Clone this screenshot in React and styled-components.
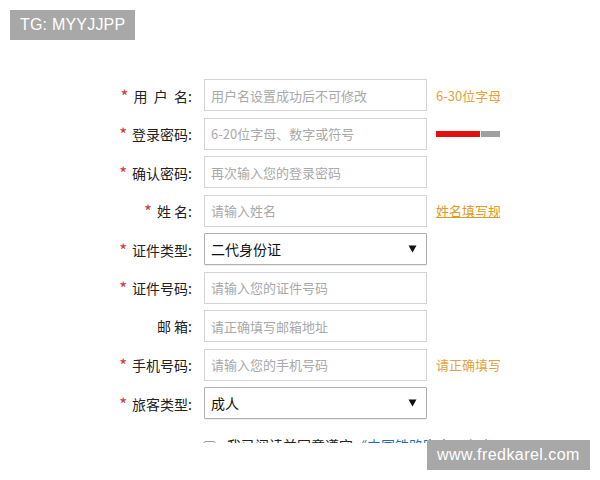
import React from "react";
import styled, { createGlobalStyle } from "styled-components";

const Global = createGlobalStyle`
  html, body { margin: 0; padding: 0; background: #fff; }
  body { font-family: "Noto Sans CJK SC", "Noto Sans", sans-serif; }
`;

const Page = styled.div`
  position: relative;
  width: 600px;
  height: 480px;
  overflow: hidden;
  background: #fff;
`;

const Stamp = styled.div`
  position: absolute;
  ${(p) => (p.$corner === "tl" ? "top: 10px; left: 10px;" : "top: 440px; left: 427px;")}
  height: 30px;
  padding: 0 10px;
  background: #a8a8a8;
  color: #fff;
  font-family: "Liberation Sans", Arial, sans-serif;
  font-size: 16px;
  letter-spacing: ${(p) => (p.$corner === "tl" ? "0.2px" : "0.45px")};
  line-height: 30px;
  white-space: nowrap;
`;

const Form = styled.div`
  margin: 79px 0 0 100px;
  width: 400px;
  height: 364px;
  overflow: hidden;
  display: flex;
  flex-direction: column;
  gap: 6.5px;
`;

const Row = styled.div`
  display: flex;
  align-items: center;
  height: 32px;
  gap: 8px;
  flex-shrink: 0;
`;

const Label = styled.div`
  width: 92px;
  padding-right: 4px;
  text-align: right;
  font-size: 14px;
  color: #222;
  white-space: pre;
  flex-shrink: 0;
`;

const Star = styled.span`
  color: #d9363e;
  font-size: 17px;
  margin-right: 5px;
  vertical-align: -1px;
`;

const Input = styled.input`
  box-sizing: border-box;
  width: 223px;
  height: 32px;
  border: 1px solid #d4d4d4;
  padding: 0 6px;
  margin: 0;
  font-family: inherit;
  font-size: 13px;
  color: #333;
  outline: none;
  flex-shrink: 0;
  &::placeholder { color: #a9a9a9; }
`;

const Select = styled.div`
  box-sizing: border-box;
  width: 223px;
  height: 32px;
  border: 1px solid #b0b0b0;
  border-radius: 1px;
  box-shadow: 0 1px 1px rgba(0, 0, 0, 0.08);
  padding: 0 9px 0 6px;
  display: flex;
  align-items: center;
  justify-content: space-between;
  font-size: 14px;
  color: #111;
  flex-shrink: 0;
`;

const Arrow = styled.svg`
  width: 9px;
  height: 8px;
`;

const Hint = styled.span`
  margin-left: 1px;
  font-size: 13px;
  white-space: nowrap;
  text-decoration: ${(p) => (p.$link ? "underline" : "none")};
  color: ${(p) => (p.$link ? "#dc9a1e" : "#e3a23a")};
`;

const Strength = styled.div`
  margin-left: 1px;
  display: flex;
  gap: 1px;
  height: 6px;
`;

const Bar = styled.div`
  height: 6px;
  width: ${(p) => p.$w}px;
  background: ${(p) => p.$c};
  flex-shrink: 0;
`;

const AgreeRow = styled.div`
  display: flex;
  align-items: flex-start;
  padding: 9px 0 0 103px;
  gap: 11px;
  font-size: 14px;
  color: #222;
  white-space: nowrap;
  flex-shrink: 0;
`;

const Box = styled.span`
  box-sizing: border-box;
  width: 13px;
  height: 13px;
  margin-top: 6px;
  border: 1px solid #9a9a9a;
  border-radius: 3px;
  flex-shrink: 0;
`;

const Blue = styled.span`
  color: #1d6fc2;
`;

const Field = ({ star, label, placeholder, children }) => (
  <Row>
    <Label>
      {star && <Star>*</Star>}
      {label}
    </Label>
    <Input placeholder={placeholder} />
    {children}
  </Row>
);

const SelectField = ({ label, value }) => (
  <Row>
    <Label>
      <Star>*</Star>
      {label}
    </Label>
    <Select>
      <span>{value}</span>
      <Arrow viewBox="0 0 9 8">
        <path d="M0.5 0.5 H8.5 L4.5 7.5 Z" fill="#111" />
      </Arrow>
    </Select>
  </Row>
);

export default function App() {
  return (
    <Page>
      <Global />
      <Stamp $corner="tl">TG: MYYJJPP</Stamp>
      <Form>
        <Field star label="用  户  名:" placeholder="用户名设置成功后不可修改">
          <Hint>6-30位字母、数字或“_”,字母开头</Hint>
        </Field>
        <Field star label="登录密码:" placeholder="6-20位字母、数字或符号">
          <Strength>
            <Bar $w={44} $c="#e41010" />
            <Bar $w={44} $c="#a0a0a0" />
          </Strength>
        </Field>
        <Field star label="确认密码:" placeholder="再次输入您的登录密码" />
        <Field star label="姓 名:" placeholder="请输入姓名">
          <Hint $link>姓名填写规则</Hint>
        </Field>
        <SelectField label="证件类型:" value="二代身份证" />
        <Field star label="证件号码:" placeholder="请输入您的证件号码" />
        <Field label="邮 箱:" placeholder="请正确填写邮箱地址" />
        <Field star label="手机号码:" placeholder="请输入您的手机号码">
          <Hint>请正确填写手机号码</Hint>
        </Field>
        <SelectField label="旅客类型:" value="成人" />
        <AgreeRow>
          <Box />
          <span>
            我已阅读并同意遵守<Blue>《中国铁路客户服务中心网站服务条款》</Blue>
          </span>
        </AgreeRow>
      </Form>
      <Stamp $corner="br">www.fredkarel.com</Stamp>
    </Page>
  );
}
